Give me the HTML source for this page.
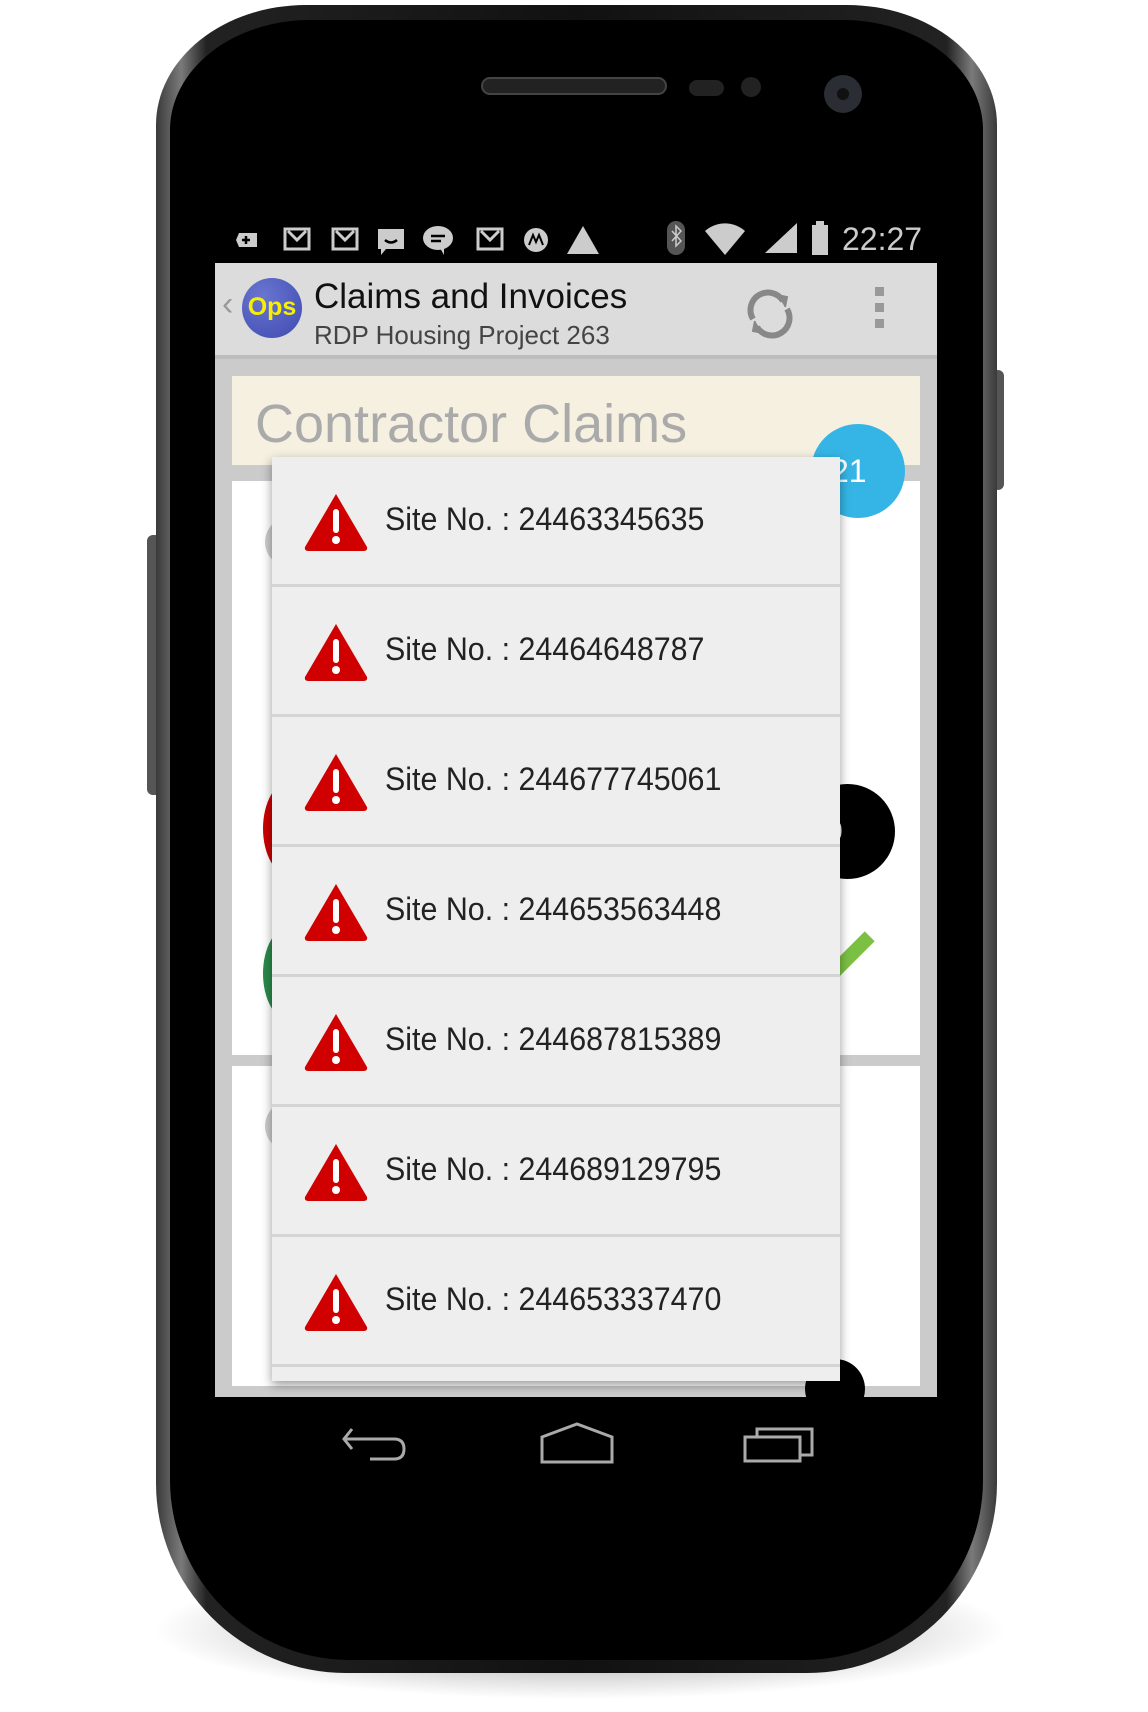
<!DOCTYPE html>
<html><head><meta charset="utf-8"><style>
*{margin:0;padding:0;box-sizing:border-box}
body{width:1148px;height:1712px;background:#fff;position:relative;overflow:hidden;font-family:"Liberation Sans",sans-serif}
.a{position:absolute}
.row{position:absolute;left:0;width:568px;height:130px;border-bottom:3px solid #d4d4d4}
.row svg{position:absolute;left:32px;top:35px}
.row span{position:absolute;left:113px;top:44px;font-size:32px;color:#222;transform:scaleX(0.95);transform-origin:0 0;white-space:nowrap}
</style></head><body>
<div class="a" style="left:150px;top:1560px;width:860px;height:140px;border-radius:50%;background:radial-gradient(ellipse,rgba(0,0,0,.45),rgba(0,0,0,0) 70%)"></div>
<div class="a" style="left:147px;top:535px;width:14px;height:260px;background:#555;border-radius:6px"></div>
<div class="a" style="left:992px;top:370px;width:12px;height:120px;background:#555;border-radius:6px"></div>
<div class="a" style="left:156px;top:5px;width:841px;height:1668px;border-radius:150px 150px 190px 190px / 120px 120px 190px 190px;background:linear-gradient(90deg,#3a3a3a,#7a7a7a 3%,#222 6%,#111 50%,#222 94%,#7a7a7a 97%,#3a3a3a)"></div>
<div class="a" style="left:170px;top:20px;width:813px;height:1640px;border-radius:140px 140px 180px 180px / 110px 110px 180px 180px;background:#000"></div>
<div class="a" style="left:481px;top:77px;width:186px;height:18px;border-radius:9px;background:#222;border:2px solid #444"></div>
<div class="a" style="left:689px;top:80px;width:35px;height:16px;border-radius:8px;background:#222"></div>
<div class="a" style="left:741px;top:77px;width:20px;height:20px;border-radius:50%;background:#222"></div>
<div class="a" style="left:824px;top:75px;width:38px;height:38px;border-radius:50%;background:#2a2d33"><div class="a" style="left:13px;top:13px;width:12px;height:12px;border-radius:50%;background:#111"></div></div>
<div class="a" style="left:215px;top:213px;width:722px;height:1281px;background:#000;overflow:hidden">
 <div class="a" style="left:0;top:0;width:722px;height:50px;background:#000;color:#ccc">
  <svg class="a" style="left:20px;top:10px" width="400" height="32" viewBox="0 0 400 32" fill="#ccc">
   <path d="M4 10h18v14H4l-3-7z"/><path d="M11 13v8M7 17h8" stroke="#000" stroke-width="2.5"/>
   <rect x="50" y="6" width="24" height="20" fill="none" stroke="#ccc" stroke-width="3"/><path d="M53 8l9 9 9-9" fill="none" stroke="#ccc" stroke-width="3"/>
   <rect x="98" y="6" width="24" height="20" fill="none" stroke="#ccc" stroke-width="3"/><path d="M101 8l9 9 9-9" fill="none" stroke="#ccc" stroke-width="3"/>
   <path d="M143 6h26v20h-18l-5 6v-6h-3z"/><path d="M150 17q6 5 12 0" stroke="#000" stroke-width="2.5" fill="none"/>
   <ellipse cx="203" cy="15" rx="15" ry="12"/><path d="M205 25l4 7v-8z"/><path d="M196 13h14M196 18h10" stroke="#000" stroke-width="2.5"/>
   <rect x="243" y="6" width="24" height="20" fill="none" stroke="#ccc" stroke-width="3"/><path d="M246 8l9 9 9-9" fill="none" stroke="#ccc" stroke-width="3"/>
   <circle cx="301" cy="17" r="12"/><path d="M294 22l4-10 3 7 3-7 4 10" stroke="#000" stroke-width="2" fill="none"/>
   <path d="M348 3l16 28h-32z"/>
  </svg>
  <svg class="a" style="left:452px;top:8px" width="180" height="36" viewBox="0 0 180 36" fill="#ccc">
   <rect x="0" y="0" width="18" height="34" rx="9" fill="#555"/><path d="M5 10l9 10-5 5V5l5 5-9 10" stroke="#ccc" stroke-width="1.5" fill="none"/>
   <path d="M38 10a30 30 0 0 1 40 0L58 34z"/>
   <path d="M98 32l32-30v30z"/>
   <rect x="145" y="4" width="16" height="30"/><rect x="149" y="0" width="8" height="5"/>
  </svg>
  <div class="a" style="left:627px;top:8px;font-size:32px;color:#ccc">22:27</div>
 </div>
 <div class="a" style="left:0;top:50px;width:722px;height:96px;background:#dcdcdc;border-bottom:4px solid #bdbdbd">
  <div class="a" style="left:7px;top:22px;font-size:34px;color:#999">‹</div>
  <div class="a" style="left:27px;top:15px;width:60px;height:60px;border-radius:50%;background:radial-gradient(circle at 35% 30%,#6a75d0,#3e4bb0);color:#f7f000;font-size:25px;font-weight:bold;text-align:center;line-height:58px">Ops</div>
  <div class="a" style="left:99px;top:14px;font-size:35px;color:#111">Claims and Invoices</div>
  <div class="a" style="left:99px;top:57px;font-size:26px;color:#444">RDP Housing Project 263</div>
  <svg class="a" style="left:530px;top:26px" width="50" height="50" viewBox="0 0 50 50" fill="none" stroke="#888" stroke-width="6"><path d="M8 30A17 17 0 0 1 38 12"/><path d="M42 20A17 17 0 0 1 12 38"/><path d="M32 6l10 2-2 10" fill="#888" stroke-width="2"/><path d="M18 44l-10-2 2-10" fill="#888" stroke-width="2"/></svg>
  <div class="a" style="left:660px;top:24px;width:9px;height:9px;background:#999"></div>
  <div class="a" style="left:660px;top:40px;width:9px;height:9px;background:#999"></div>
  <div class="a" style="left:660px;top:56px;width:9px;height:9px;background:#999"></div>
 </div>
 <div class="a" style="left:0;top:146px;width:722px;height:1038px;background:#cbcbcb">
  <div class="a" style="left:17px;top:17px;width:688px;height:89px;background:#f5f0e0"></div>
  <div class="a" style="left:40px;top:34px;font-size:54px;color:#aaa">Contractor Claims</div>
  <div class="a" style="left:17px;top:122px;width:688px;height:574px;background:#fff"></div>
  <div class="a" style="left:17px;top:707px;width:688px;height:320px;background:#fff"></div>
  <div class="a" style="left:50px;top:158px;width:50px;height:50px;border-radius:50%;background:#ccc"></div>
  <div class="a" style="left:48px;top:422px;width:55px;height:95px;border-radius:50%;background:#c00"></div>
  <div class="a" style="left:48px;top:567px;width:55px;height:95px;border-radius:50%;background:#2a8a4a"></div>
  <div class="a" style="left:50px;top:742px;width:50px;height:50px;border-radius:50%;background:#ccc"></div>
  <div class="a" style="left:596px;top:65px;width:94px;height:94px;border-radius:50%;background:#35b5e5;color:#fff;font-size:32px;line-height:94px;padding-left:20px">21</div>
  <div class="a" style="left:585px;top:425px;width:95px;height:95px;border-radius:50%;background:#000;color:#fff;font-size:30px;line-height:95px;padding-left:26px">0</div>
  <div class="a" style="left:630px;top:570px;width:14px;height:50px;background:#7bc043;transform:rotate(45deg)"></div>
  <div class="a" style="left:590px;top:1000px;width:60px;height:60px;border-radius:50%;background:#000"></div>
 </div>
 <div class="a" style="left:57px;top:244px;width:568px;height:924px;background:#eee;box-shadow:0 4px 10px rgba(0,0,0,.4);overflow:hidden">
  <div class="row" style="top:0"><svg width="64" height="60" viewBox="0 0 64 60"><path d="M32 2L63 55q1 4-4 4H5q-5 0-4-4z" fill="#d00000"/><rect x="29" y="17" width="6" height="24" rx="3" fill="#fff"/><circle cx="32" cy="48" r="4" fill="#fff"/></svg><span>Site No. : 24463345635</span></div>
  <div class="row" style="top:130px"><svg width="64" height="60" viewBox="0 0 64 60"><path d="M32 2L63 55q1 4-4 4H5q-5 0-4-4z" fill="#d00000"/><rect x="29" y="17" width="6" height="24" rx="3" fill="#fff"/><circle cx="32" cy="48" r="4" fill="#fff"/></svg><span>Site No. : 24464648787</span></div>
  <div class="row" style="top:260px"><svg width="64" height="60" viewBox="0 0 64 60"><path d="M32 2L63 55q1 4-4 4H5q-5 0-4-4z" fill="#d00000"/><rect x="29" y="17" width="6" height="24" rx="3" fill="#fff"/><circle cx="32" cy="48" r="4" fill="#fff"/></svg><span>Site No. : 244677745061</span></div>
  <div class="row" style="top:390px"><svg width="64" height="60" viewBox="0 0 64 60"><path d="M32 2L63 55q1 4-4 4H5q-5 0-4-4z" fill="#d00000"/><rect x="29" y="17" width="6" height="24" rx="3" fill="#fff"/><circle cx="32" cy="48" r="4" fill="#fff"/></svg><span>Site No. : 244653563448</span></div>
  <div class="row" style="top:520px"><svg width="64" height="60" viewBox="0 0 64 60"><path d="M32 2L63 55q1 4-4 4H5q-5 0-4-4z" fill="#d00000"/><rect x="29" y="17" width="6" height="24" rx="3" fill="#fff"/><circle cx="32" cy="48" r="4" fill="#fff"/></svg><span>Site No. : 244687815389</span></div>
  <div class="row" style="top:650px"><svg width="64" height="60" viewBox="0 0 64 60"><path d="M32 2L63 55q1 4-4 4H5q-5 0-4-4z" fill="#d00000"/><rect x="29" y="17" width="6" height="24" rx="3" fill="#fff"/><circle cx="32" cy="48" r="4" fill="#fff"/></svg><span>Site No. : 244689129795</span></div>
  <div class="row" style="top:780px"><svg width="64" height="60" viewBox="0 0 64 60"><path d="M32 2L63 55q1 4-4 4H5q-5 0-4-4z" fill="#d00000"/><rect x="29" y="17" width="6" height="24" rx="3" fill="#fff"/><circle cx="32" cy="48" r="4" fill="#fff"/></svg><span>Site No. : 244653337470</span></div>
 </div>
 <div class="a" style="left:0;top:1184px;width:722px;height:97px;background:#000">
  <svg class="a" style="left:125px;top:30px" width="80" height="40" viewBox="0 0 80 40" fill="none" stroke="#aaa" stroke-width="3"><path d="M12 2L4 12l8 10"/><path d="M4 12h50q10 0 10 10t-10 10H30"/></svg>
  <svg class="a" style="left:325px;top:25px" width="75" height="42" viewBox="0 0 75 42" fill="none" stroke="#aaa" stroke-width="3"><path d="M2 40V15L37 2l35 13v25z"/></svg>
  <svg class="a" style="left:528px;top:28px" width="75" height="40" viewBox="0 0 75 40" fill="none" stroke="#aaa" stroke-width="3"><rect x="2" y="12" width="55" height="24"/><path d="M14 12V4h55v26h-12"/></svg>
 </div>
</div>
</body></html>
